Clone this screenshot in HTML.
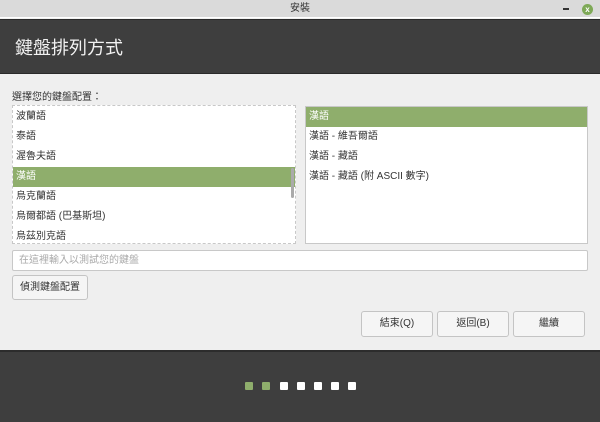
<!DOCTYPE html>
<html><head><meta charset="utf-8"><style>
*{margin:0;padding:0;box-sizing:border-box}
body{width:600px;height:422px;overflow:hidden;background:#efefef;font-family:"Liberation Sans","Noto Sans CJK TC",sans-serif;font-size:10px;color:#333;position:relative}
.abs{position:absolute}
.tb{left:0;top:0;width:600px;height:18px;background:#dadada;border-bottom:1px solid #fff;text-align:center;line-height:18px;font-size:10px;color:#333}
.hd{left:0;top:19px;width:600px;height:55px;background:#3e3e3e;border-top:1px solid #2a2a2a;border-bottom:1px solid #2a2a2a}
.hd span{position:absolute;left:15px;top:14px;font-size:18px;color:#f2f2f2}
.list{background:#fff;border:1px solid #c8c8c8}
.row{height:20px;line-height:20px;padding-left:3px;font-size:10px;color:#333}
.sel{background:#8fae6c;color:#fff}
.btn{border:1px solid #c4c4c4;border-radius:3px;background:#f5f5f5;text-align:center;font-size:10px;color:#333}
.ft{left:0;top:350px;width:600px;height:72px;background:#3e3e3e;border-top:2px solid #2c2c2c}
.dot{width:8px;height:8px;border-radius:1px;background:#fff;top:382px}
</style></head><body>
<div class="abs tb">安裝
<span style="position:absolute;left:563px;top:8px;width:6px;height:2px;background:#333"></span>
<span style="position:absolute;left:582px;top:4px;width:11px;height:11px;border-radius:50%;background:#7ea957;color:#fff;font-size:8px;line-height:11px;font-weight:bold">x</span>
</div>
<div class="abs hd"><span>鍵盤排列方式</span></div>
<div class="abs" style="left:12px;top:88px;font-size:10px">選擇您的鍵盤配置：</div>
<div class="abs list" style="left:12px;top:105px;width:284px;height:139px;border-style:dashed;overflow:hidden;padding-top:1px">
<div class="row">波蘭語</div><div class="row">泰語</div><div class="row">渥魯夫語</div>
<div class="row sel">漢語</div><div class="row">烏克蘭語</div><div class="row">烏爾都語 (巴基斯坦)</div><div class="row">烏茲別克語</div>
<div class="abs" style="left:278px;top:62px;width:3px;height:30px;background:#aaa;border-radius:2px"></div>
</div>
<div class="abs list" style="left:305px;top:106px;width:283px;height:138px">
<div class="row sel">漢語</div><div class="row">漢語 - 維吾爾語</div><div class="row">漢語 - 藏語</div><div class="row">漢語 - 藏語 (附 ASCII 數字)</div>
</div>
<div class="abs list" style="left:12px;top:250px;width:576px;height:21px;line-height:19px;padding-left:6px;color:#aaa;border-radius:2px">在這裡輸入以測試您的鍵盤</div>
<div class="abs btn" style="left:12px;top:275px;width:76px;height:25px;line-height:23px">偵測鍵盤配置</div>
<div class="abs btn" style="left:361px;top:311px;width:72px;height:26px;line-height:24px">結束(Q)</div>
<div class="abs btn" style="left:437px;top:311px;width:72px;height:26px;line-height:24px">返回(B)</div>
<div class="abs btn" style="left:513px;top:311px;width:72px;height:26px;line-height:24px">繼續</div>
<div class="abs ft"></div>
<div class="abs dot" style="left:245px;background:#8fae6c"></div>
<div class="abs dot" style="left:262px;background:#8fae6c"></div>
<div class="abs dot" style="left:280px"></div>
<div class="abs dot" style="left:297px"></div>
<div class="abs dot" style="left:314px"></div>
<div class="abs dot" style="left:331px"></div>
<div class="abs dot" style="left:348px"></div>
</body></html>
